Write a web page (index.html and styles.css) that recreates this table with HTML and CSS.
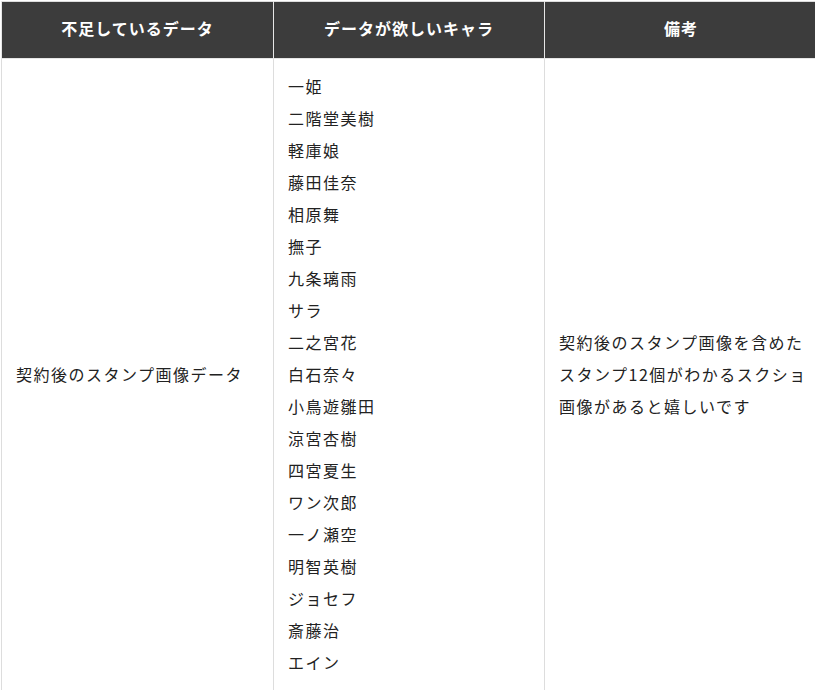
FILE: index.html
```html
<!DOCTYPE html>
<html lang="ja">
<head>
<meta charset="utf-8">
<link rel="stylesheet" href="styles.css">
</head>
<body>
<table class="data-table">
  <colgroup>
    <col class="c1"><col class="c2"><col class="c3">
  </colgroup>
  <thead>
    <tr>
      <th>不足しているデータ</th>
      <th>データが欲しいキャラ</th>
      <th>備考</th>
    </tr>
  </thead>
  <tbody>
    <tr>
      <td class="mid">契約後のスタンプ画像データ</td>
      <td>
        <ul class="names">
          <li>一姫</li>
          <li>二階堂美樹</li>
          <li>軽庫娘</li>
          <li>藤田佳奈</li>
          <li>相原舞</li>
          <li>撫子</li>
          <li>九条璃雨</li>
          <li>サラ</li>
          <li>二之宮花</li>
          <li>白石奈々</li>
          <li>小鳥遊雛田</li>
          <li>涼宮杏樹</li>
          <li>四宮夏生</li>
          <li>ワン次郎</li>
          <li>一ノ瀬空</li>
          <li>明智英樹</li>
          <li>ジョセフ</li>
          <li>斎藤治</li>
          <li>エイン</li>
        </ul>
      </td>
      <td class="mid note">契約後のスタンプ画像を含めたスタンプ12個がわかるスクショ画像があると嬉しいです</td>
    </tr>
  </tbody>
</table>
</body>
</html>
```

FILE: styles.css
```css
html, body {
  margin: 0;
  padding: 0;
  background: #ffffff;
}
body {
  padding: 1px 0 0 1px;
  font-family: "Noto Sans CJK JP", "Noto Sans", sans-serif;
  color: #222222;
}
.data-table {
  border-collapse: collapse;
  table-layout: fixed;
  width: 816px;
  border: 1px solid #dddddd;
}
.c1 { width: 272px; }
.c2 { width: 271px; }
.c3 { width: 273px; }
.data-table th {
  background: #3c3c3c;
  color: #ffffff;
  font-weight: bold;
  font-size: 16px;
  letter-spacing: 1px;
  height: 52px;
  padding: 0 0 4px 0;
  text-align: center;
  vertical-align: middle;
  border: 1px solid #e6e6e6;
  border-top: none;
}
.data-table td {
  border: 1px solid #dddddd;
  padding: 11px 8px 13px 14px;
  font-size: 16px;
  letter-spacing: 1.5px;
  line-height: 32px;
  vertical-align: top;
}
.data-table td.mid {
  vertical-align: middle;
}
.names {
  list-style: none;
  margin: 0;
  padding: 0;
}
```
